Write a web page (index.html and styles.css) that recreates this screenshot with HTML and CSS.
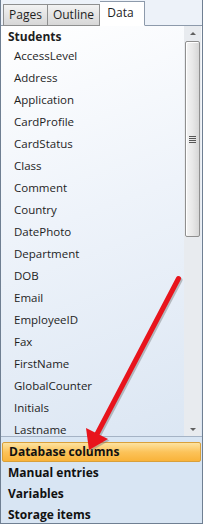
FILE: index.html
```html
<!DOCTYPE html>
<html>
<head>
<meta charset="utf-8">
<link rel="stylesheet" href="styles.css">
</head>
<body>
<div class="window">
  <div class="tabs">
    <div class="tab pages">Pages</div>
    <div class="tab outline">Outline</div>
    <div class="tab active">Data</div>
  </div>
  <div class="panel">
    <div class="list">
      <div class="group">Students</div>
      <div class="item">AccessLevel</div>
      <div class="item">Address</div>
      <div class="item">Application</div>
      <div class="item">CardProfile</div>
      <div class="item">CardStatus</div>
      <div class="item">Class</div>
      <div class="item">Comment</div>
      <div class="item">Country</div>
      <div class="item">DatePhoto</div>
      <div class="item">Department</div>
      <div class="item">DOB</div>
      <div class="item">Email</div>
      <div class="item">EmployeeID</div>
      <div class="item">Fax</div>
      <div class="item">FirstName</div>
      <div class="item">GlobalCounter</div>
      <div class="item">Initials</div>
      <div class="item">Lastname</div>
    </div>
    <div class="scrollbar">
      <div class="arrow up"></div>
      <div class="thumb"><div class="grip"></div></div>
      <div class="spacer"></div>
      <div class="arrow down"></div>
    </div>
  </div>
  <div class="sources">
    <div class="source selected">Database columns</div>
    <div class="source">Manual entries</div>
    <div class="source">Variables</div>
    <div class="source">Storage items</div>
  </div>
  <svg class="pointer" width="203" height="524" viewBox="0 0 203 524">
    <g transform="translate(1.5,1.5)" fill="#7a7a7a" stroke="#7a7a7a" opacity="0.45">
      <line x1="178.5" y1="278.5" x2="97" y2="434" stroke-width="5" stroke-linecap="round"/>
      <polygon points="89,450 86,428 108,439" stroke="none"/>
    </g>
    <line x1="178.5" y1="278.5" x2="97" y2="434" stroke="#e8141c" stroke-width="5" stroke-linecap="round"/>
    <polygon points="89,450 86,428 108,439" fill="#e8141c"/>
  </svg>
</div>
</body>
</html>
```

FILE: styles.css
```css
* { box-sizing: border-box; }
html, body { margin: 0; padding: 0; }
body {
  font-family: "Open Sans", "Noto Sans", sans-serif;
  font-size: 11.5px;
  color: #1e1e1e;
}
.window {
  position: relative;
  width: 203px;
  height: 524px;
  overflow: hidden;
  background: #d8e5f3;
  border-left: 1px solid #6f7f92;
  border-right: 1px solid #6f7f92;
  border-bottom: 1px solid #6f7f92;
  display: flex;
  flex-direction: column;
}
.tabs {
  height: 26px;
  flex: none;
  display: flex;
  align-items: flex-end;
  padding-left: 2px;
  background: #edf2f9;
  border-bottom: 1px solid #8d9aab;
}
.tab {
  height: 22px;
  margin-bottom: -1px;
  padding-bottom: 1px;
  display: flex;
  align-items: center;
  justify-content: center;
  border: 1px solid #8e8f8f;
  border-right: none;
  background: linear-gradient(#f3f3f3, #e4e4e4 50%, #d7d7d7);
  font-size: 12px;
  color: #1e1e1e;
}
.tab.pages { width: 44px; }
.tab.outline { width: 53px; border-right: 1px solid #8e8f8f; }
.tab.active {
  width: 45px;
  height: 25px;
  padding: 0 3px 3px 0;
  background: #ffffff;
  border: 1px solid #8d9aab;
  border-bottom: 1px solid #ffffff;
  border-left: none;
}
.panel {
  height: 411px;
  flex: none;
  display: flex;
  background: linear-gradient(160deg, #ffffff 0%, #eef3fa 45%, #dbe6f3 100%);
  border-bottom: 1px solid #a5b3c5;
}
.list {
  flex: 1;
  padding-left: 7px;
  padding-top: 2px;
  overflow: hidden;
}
.group {
  height: 17px;
  line-height: 17px;
  font-weight: bold;
  font-size: 12px;
}
.item {
  height: 22px;
  line-height: 22px;
  padding-left: 6px;
  white-space: nowrap;
}
.scrollbar {
  width: 17px;
  flex: none;
  margin-right: 1px;
  background: #e8ebef;
  display: flex;
  flex-direction: column;
  align-items: center;
}
.arrow {
  height: 15px;
  width: 17px;
  flex: none;
  position: relative;
}
.arrow::after {
  content: "";
  position: absolute;
  left: 6px;
  width: 0;
  height: 0;
  border-left: 3px solid transparent;
  border-right: 3px solid transparent;
}
.arrow.up::after { top: 6px; border-bottom: 3px solid #606060; }
.arrow.down::after { top: 7px; border-top: 3px solid #606060; }
.thumb {
  width: 15px;
  height: 196px;
  flex: none;
  border: 1px solid #8f8f8f;
  border-radius: 2px;
  background: linear-gradient(90deg, #f4f4f4, #e8e8e8 50%, #d6d6d6);
  box-shadow: inset 1px 1px 0 #ffffff;
  display: flex;
  align-items: center;
  justify-content: center;
}
.grip {
  width: 7px;
  height: 7px;
  background: repeating-linear-gradient(#555 0 1px, transparent 1px 2px);
}
.spacer { flex: 1; }
.sources {
  flex: 1;
  padding: 5px 1px 0 1px;
}
.source {
  height: 21px;
  line-height: 21px;
  padding-left: 6px;
  font-weight: bold;
  font-size: 12px;
  color: #111;
  white-space: nowrap;
}
.source.selected {
  height: 20px;
  line-height: 18px;
  border: 1px solid #d9a03a;
  border-radius: 2px;
  background: linear-gradient(#fde3a0, #fcc35a 50%, #f9b33a);
}
.pointer {
  position: absolute;
  left: -1px;
  top: 0;
  pointer-events: none;
}
```
